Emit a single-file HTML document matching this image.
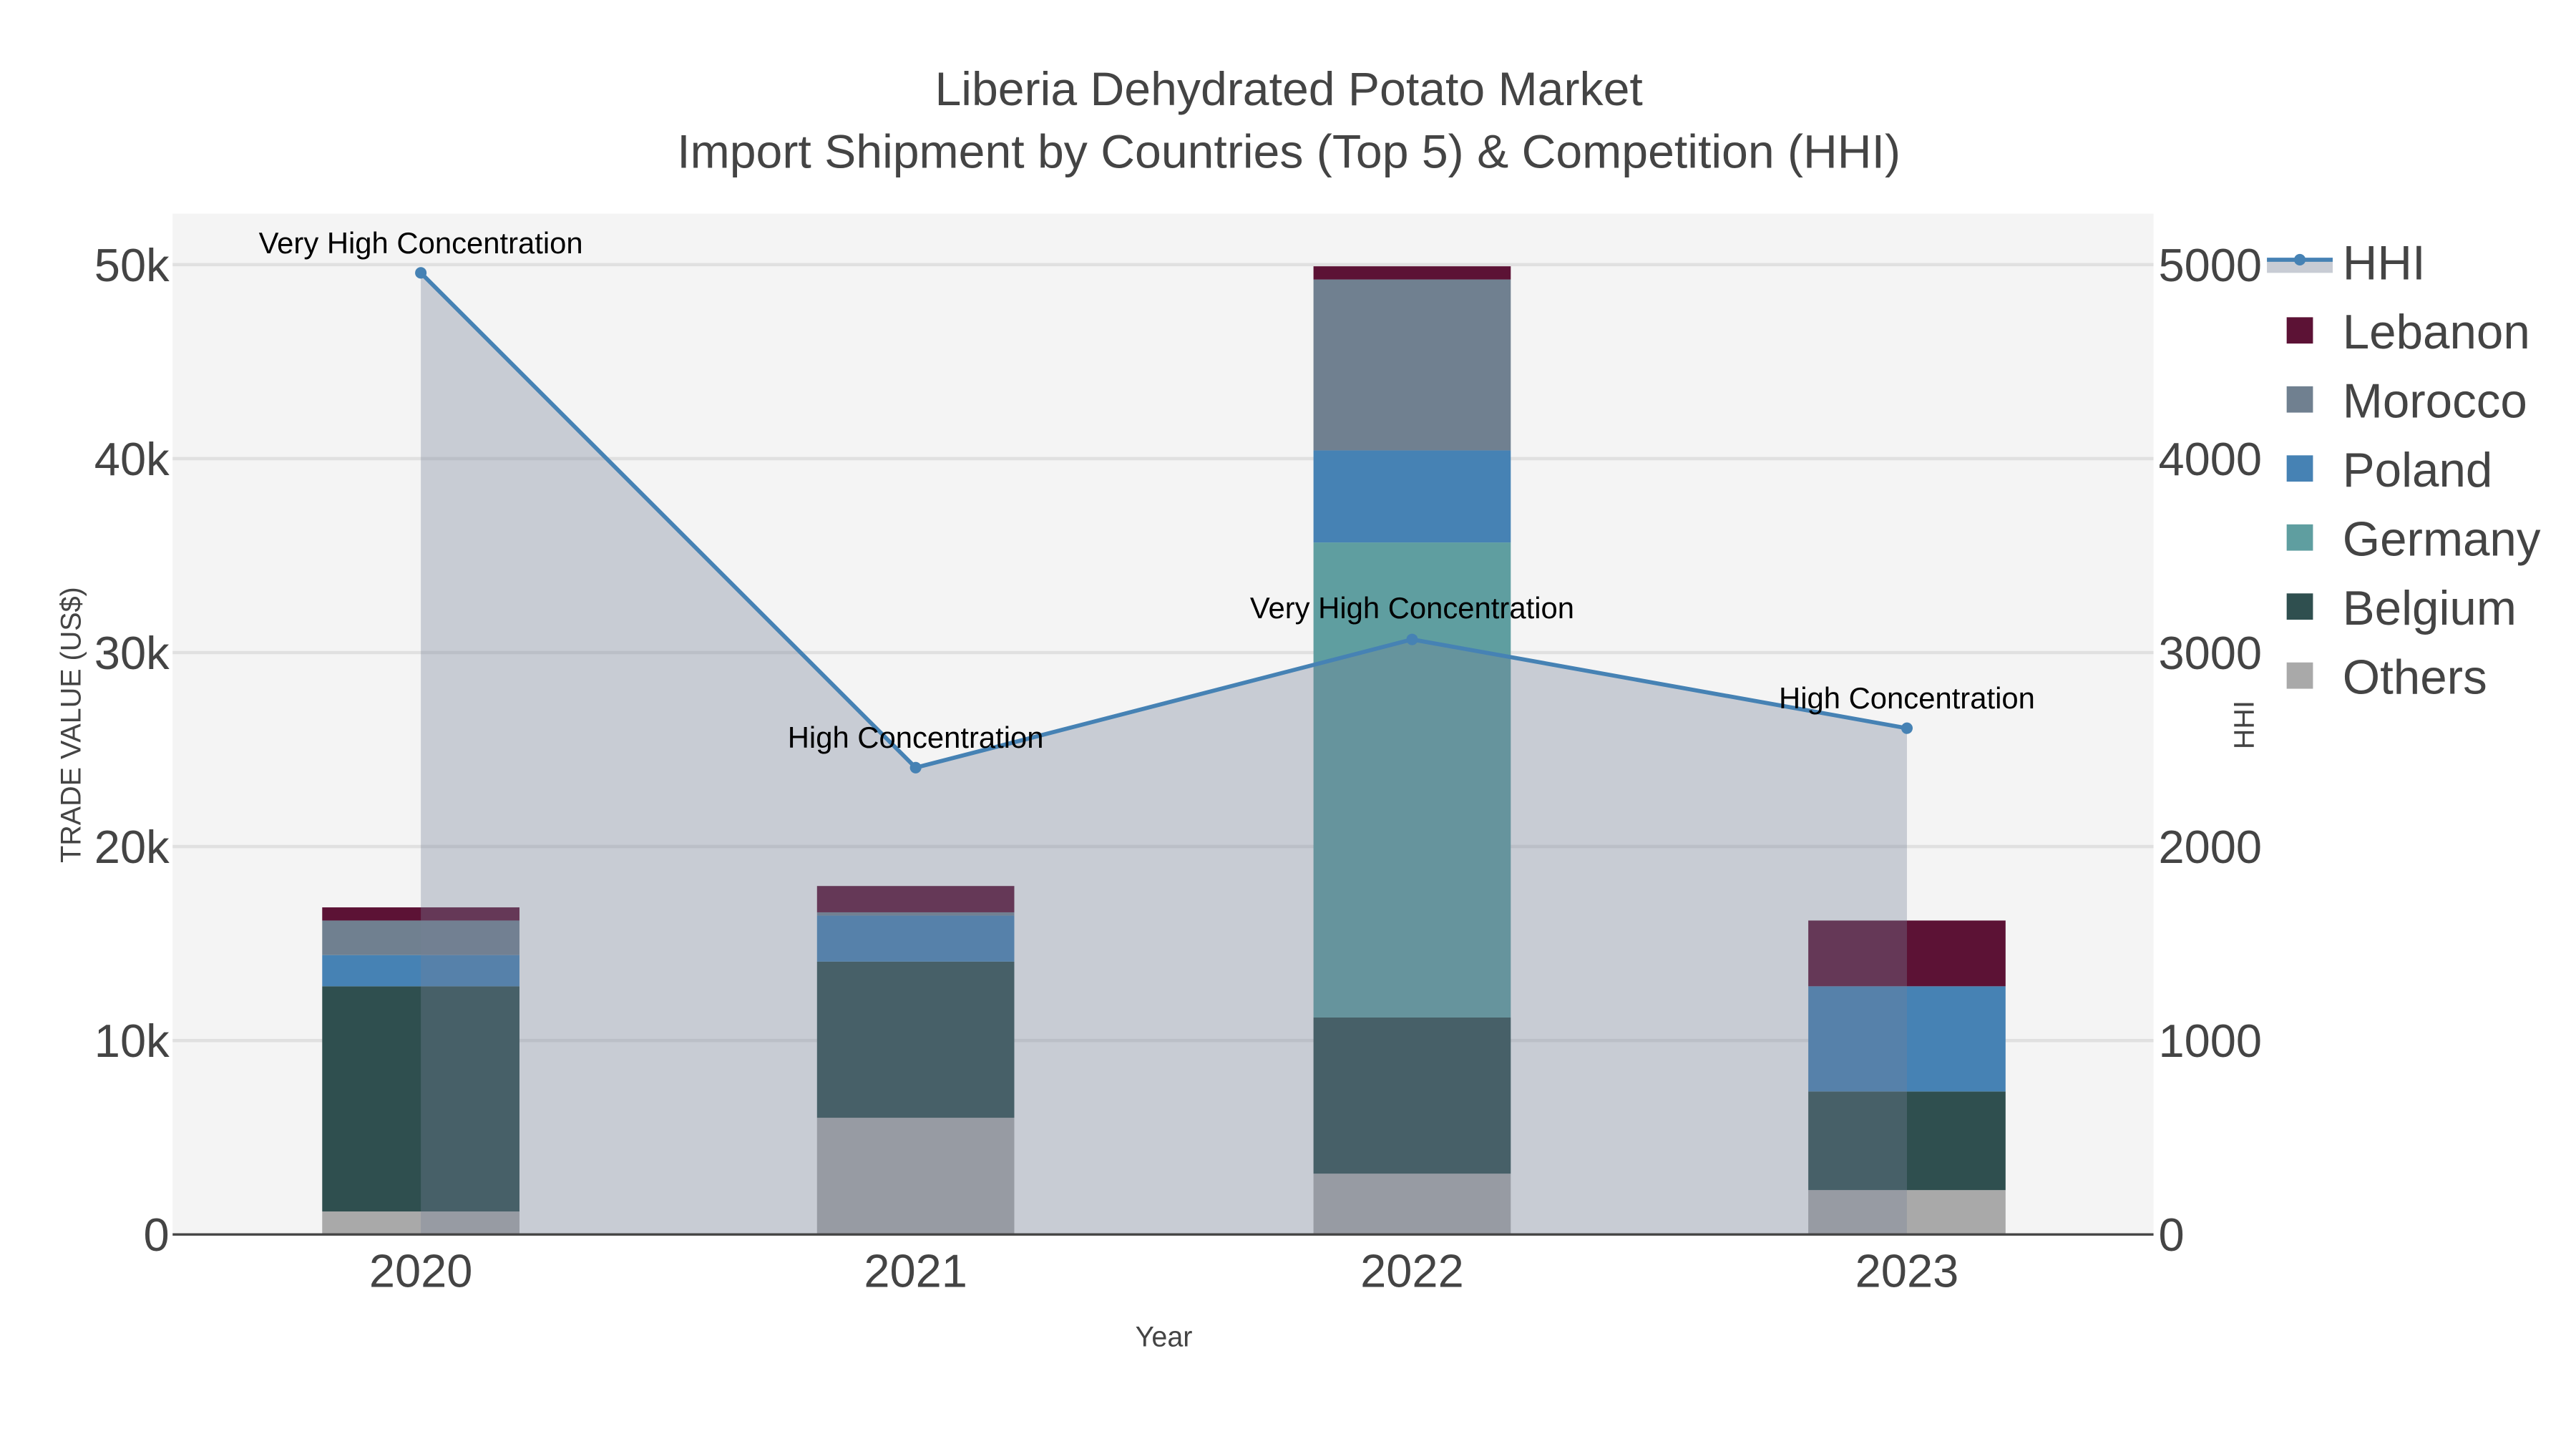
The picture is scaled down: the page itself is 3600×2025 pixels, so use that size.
<!DOCTYPE html>
<html><head><meta charset="utf-8"><style>html,body{margin:0;padding:0;background:#fff}svg{display:block}</style></head>
<body>
<svg width="3600" height="2025" viewBox="0 0 1567 881.5" preserveAspectRatio="none" xmlns="http://www.w3.org/2000/svg" font-family="Liberation Sans, sans-serif">
<rect width="1600" height="900" fill="#fff"/>
<rect x="105" y="130" width="1205" height="621" fill="#f4f4f4"/>
<g stroke="#e0e0e0" stroke-width="2">
<line x1="105" x2="1310" y1="633" y2="633"/><line x1="105" x2="1310" y1="515" y2="515"/>
<line x1="105" x2="1310" y1="397" y2="397"/><line x1="105" x2="1310" y1="279" y2="279"/>
<line x1="105" x2="1310" y1="161" y2="161"/>
</g>
<g>
<rect x="196" y="737" width="120" height="14" fill="#a9a9a9"/>
<rect x="196" y="600" width="120" height="137" fill="#2f4f4f"/>
<rect x="196" y="581" width="120" height="19" fill="#4682b4"/>
<rect x="196" y="560" width="120" height="21" fill="#708090"/>
<rect x="196" y="552" width="120" height="8" fill="#5c1235"/>

<rect x="497" y="680" width="120" height="71" fill="#a9a9a9"/>
<rect x="497" y="585" width="120" height="95" fill="#2f4f4f"/>
<rect x="497" y="557" width="120" height="28" fill="#4682b4"/>
<rect x="497" y="555" width="120" height="2" fill="#708090"/>
<rect x="497" y="539" width="120" height="16" fill="#5c1235"/>

<rect x="799" y="714" width="120" height="37" fill="#a9a9a9"/>
<rect x="799" y="619" width="120" height="95" fill="#2f4f4f"/>
<rect x="799" y="330" width="120" height="289" fill="#5f9ea0"/>
<rect x="799" y="274" width="120" height="56" fill="#4682b4"/>
<rect x="799" y="170" width="120" height="104" fill="#708090"/>
<rect x="799" y="162" width="120" height="8" fill="#5c1235"/>

<rect x="1100" y="724" width="120" height="27" fill="#a9a9a9"/>
<rect x="1100" y="664" width="120" height="60" fill="#2f4f4f"/>
<rect x="1100" y="600" width="120" height="64" fill="#4682b4"/>
<rect x="1100" y="560" width="120" height="40" fill="#5c1235"/>
</g>
<polygon points="256,166 557,467 859,389 1160,443 1160,751 256,751" fill="rgba(118,130,152,0.35)"/>
<polyline points="256,166 557,467 859,389 1160,443" fill="none" stroke="#4682b4" stroke-width="2.5"/>
<g fill="#4682b4"><circle cx="256" cy="166" r="3.5"/><circle cx="557" cy="467" r="3.5"/><circle cx="859" cy="389" r="3.5"/><circle cx="1160" cy="443" r="3.5"/></g>
<line x1="105" x2="1310" y1="751" y2="751" stroke="#444" stroke-width="1.5"/>
<g font-size="18.2" fill="#000" text-anchor="middle">
<text x="256" y="154">Very High Concentration</text>
<text x="557" y="455">High Concentration</text>
<text x="859" y="376">Very High Concentration</text>
<text x="1160" y="431">High Concentration</text>
</g>
<g font-size="28.3" fill="#444" text-anchor="end">
<text x="103" y="761">0</text><text x="103" y="643">10k</text><text x="103" y="525">20k</text>
<text x="103" y="407">30k</text><text x="103" y="289">40k</text><text x="103" y="171">50k</text>
</g>
<g font-size="28.3" fill="#444">
<text x="1313" y="761">0</text><text x="1313" y="643">1000</text><text x="1313" y="525">2000</text>
<text x="1313" y="407">3000</text><text x="1313" y="289">4000</text><text x="1313" y="171">5000</text>
</g>
<g font-size="28.3" fill="#444" text-anchor="middle">
<text x="256" y="783">2020</text><text x="557" y="783">2021</text><text x="859" y="783">2022</text><text x="1160" y="783">2023</text>
</g>
<text x="708" y="819" font-size="17.2" fill="#444" text-anchor="middle">Year</text>
<text transform="translate(49,441) rotate(-90)" font-size="17.2" fill="#444" text-anchor="middle">TRADE VALUE (US$)</text>
<text transform="translate(1371,441) rotate(-90)" font-size="17.2" fill="#444" text-anchor="middle">HHI</text>
<g font-size="28.8" fill="#444" text-anchor="middle">
<text x="784" y="64">Liberia Dehydrated Potato Market</text>
<text x="784" y="102">Import Shipment by Countries (Top 5) &amp; Competition (HHI)</text>
</g>
<rect x="1379" y="158" width="40" height="8" fill="#c8ccd4"/>
<line x1="1379" x2="1419" y1="158" y2="158" stroke="#4682b4" stroke-width="2.5"/>
<circle cx="1399" cy="158" r="3.5" fill="#4682b4"/>
<g>
<rect x="1391" y="193" width="16" height="16" fill="#5c1235"/>
<rect x="1391" y="235" width="16" height="16" fill="#708090"/>
<rect x="1391" y="277" width="16" height="16" fill="#4682b4"/>
<rect x="1391" y="319" width="16" height="16" fill="#5f9ea0"/>
<rect x="1391" y="361" width="16" height="16" fill="#2f4f4f"/>
<rect x="1391" y="403" width="16" height="16" fill="#a9a9a9"/>
</g>
<g font-size="29.3" fill="#444">
<text x="1425" y="170">HHI</text><text x="1425" y="212">Lebanon</text><text x="1425" y="254">Morocco</text>
<text x="1425" y="296">Poland</text><text x="1425" y="338">Germany</text><text x="1425" y="380">Belgium</text><text x="1425" y="422">Others</text>
</g>
</svg>
</body></html>
